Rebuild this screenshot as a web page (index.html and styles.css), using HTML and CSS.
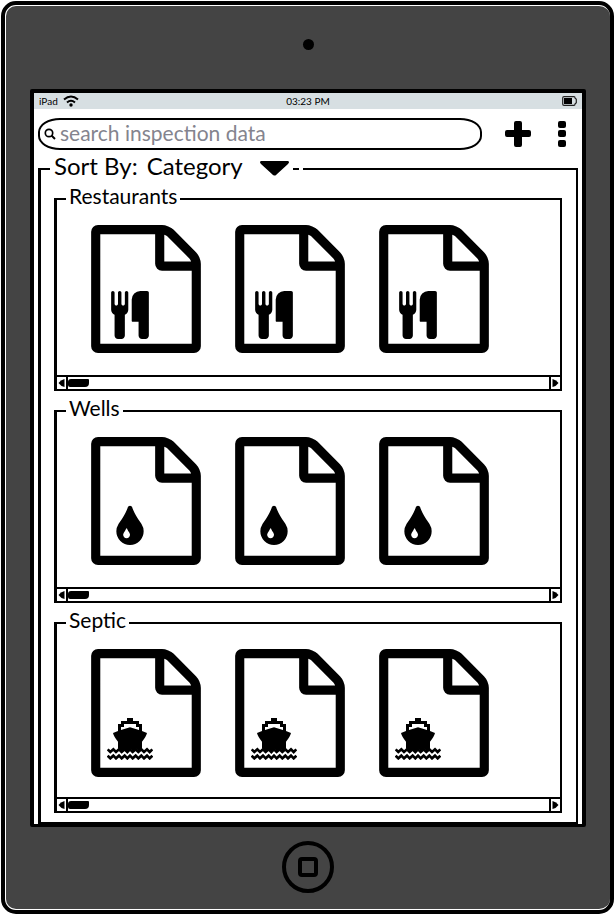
FILE: index.html
```html
<!DOCTYPE html>
<html lang="en">
<head>
<meta charset="utf-8">
<meta name="viewport" content="width=device-width, initial-scale=1">
<title>Inspection data</title>
<link rel="stylesheet" href="styles.css">
</head>
<body>
<svg class="defs" aria-hidden="true">
  <symbol id="file" viewBox="0 0 1536 1792"><path d="M1468 380q28 28 48 76t20 88v1152q0 40-28 68t-68 28h-1344q-40 0-68-28t-28-68v-1600q0-40 28-68t68-28h896q40 0 88 20t76 48zm-444-244v376h376q-10-29-22-41l-313-313q-12-12-41-22zm384 1528v-1024h-416q-40 0-68-28t-28-68v-416h-768v1536h1280z"/></symbol>
  <symbol id="cutlery" viewBox="0 0 1408 1792"><path d="M640 64v640q0 61-35.5 111t-92.5 70v779q0 52-38 90t-90 38h-128q-52 0-90-38t-38-90v-779q-57-20-92.5-70t-35.5-111v-640q0-26 19-45t45-19 45 19 19 45v416q0 26 19 45t45 19 45-19 19-45v-416q0-26 19-45t45-19 45 19 19 45v416q0 26 19 45t45 19 45-19 19-45v-416q0-26 19-45t45-19 45 19 19 45zm768 0v1600q0 52-38 90t-90 38h-128q-52 0-90-38t-38-90v-512h-224q-13 0-22.5-9.5t-9.5-22.5v-800q0-132 94-226t226-94h256q26 0 45 19t19 45z"/></symbol>
  <symbol id="drop" viewBox="0 0 1024 1536"><path d="M512 1152q0-36-20-69-1-1-15.500-22.500t-25.500-38-25-44-21-50.500q-4-16-21-16t-21 16q-7 23-21 50.500t-25 44-25.500 38-15.500 22.500q-20 33-20 69 0 53 37.500 90.500t90.500 37.500 90.500-37.500 37.500-90.500zm512-128q0 212-150 362t-362 150-362-150-150-362q0-145 81-275 6-9 62.500-90.500t101-151 99.500-178 83-201.500q9-30 34-47t51-17 51.500 17 33.500 47q28 93 83 201.500t99.500 178 101 151 62.500 90.500q81 127 81 275z"/></symbol>
  <symbol id="ship" viewBox="0 0 138 126">
    <path d="M60 0h18v9h18v9h9v21l15 6q-2 10-15 26v20l-9 9-9-8-8 8-9-8-8 8-9-8-8 8-12-9V71Q20 55 18 45l15-6V18h9V9h18zM42 36l27-8 27 8V27h-9v-9H51v9h-9z"/>
    <g fill="none" stroke="#000" stroke-width="8"><path d="M2 94l8 8 9-8 8 8 9-8 8 8 9-8 8 8 8-8 8 8 9-8 8 8 9-8 8 8 9-8 8 8 8-8"/><path d="M2 113l8 8 9-8 8 8 9-8 8 8 9-8 8 8 8-8 8 8 9-8 8 8 9-8 8 8 9-8 8 8 8-8"/></g>
  </symbol>
  <symbol id="arrow" viewBox="0 0 6 8"><path d="M6 0v8Q2 7 0 4 2 1 6 0z"/></symbol>
</svg>

<div class="device">
  <div class="bezel-top"><span class="camera"></span></div>
  <div class="screen">
    <div class="status">
      <span class="carrier">iPad
        <svg width="16" height="12" viewBox="0 0 16 12" aria-hidden="true"><g fill="none" stroke="#000" stroke-width="2"><path d="M1 4.500Q8-1.500 15 4.500"/><path d="M4 7.500Q8 4 12 7.500"/></g><circle cx="8" cy="10" r="1.700"/></svg>
      </span>
      <time>03:23 PM</time>
      <svg class="battery" width="15" height="10" viewBox="0 0 15 10" aria-hidden="true"><path d="M2 .7h10q1 0 1 1.300l1.300 1.200v3.600L13 8q0 1.300-1 1.300H2Q.7 9.300.7 8V2Q.7.7 2 .7z" fill="none" stroke="#222" stroke-width="1.200"/><path d="M2 2h8v6H2z"/></svg>
    </div>

    <div class="toolbar">
      <label class="search">
        <svg width="12" height="12" viewBox="0 0 12 12" aria-hidden="true"><circle cx="5" cy="5" r="3.700" fill="none" stroke="#000" stroke-width="1.700"/><path d="M7.500 7.500L11 11" stroke="#000" stroke-width="2"/></svg>
        <input type="search" placeholder="search inspection data" aria-label="search inspection data">
      </label>
      <button class="add" type="button" aria-label="Add"><svg width="26" height="26" viewBox="0 0 26 26"><path d="M11 0h4q2 0 2 2v7h7q2 0 2 2v3q0 2-2 2h-7v8q0 2-2 2h-4q-2 0-2-2v-8H2q-2 0-2-2v-3q0-2 2-2h7V2q0-2 2-2z"/></svg></button>
      <button class="more" type="button" aria-label="More"><svg width="8" height="26" viewBox="0 0 8 26"><rect width="8" height="7" rx="2"/><rect y="9" width="8" height="7" rx="2"/><rect y="19" width="8" height="7" rx="2"/></svg></button>
    </div>

    <fieldset class="sorted">
      <legend>
        <label for="sort">Sort By:</label>
        <select id="sort"><option>Category</option></select>
        <svg class="caret" width="29" height="15" viewBox="0 0 29 15" aria-hidden="true"><path d="M1 0h27q2 1 0 3L16 14q-1 1-3 0L1 3Q-1 1 1 0z"/></svg>
        <span class="dash"></span>
      </legend>

      <fieldset class="group">
        <legend>Restaurants</legend>
        <div class="files">
          <div class="file"><svg class="page"><use href="#file"/></svg><svg class="mark cutlery"><use href="#cutlery"/></svg></div>
          <div class="file"><svg class="page"><use href="#file"/></svg><svg class="mark cutlery"><use href="#cutlery"/></svg></div>
          <div class="file"><svg class="page"><use href="#file"/></svg><svg class="mark cutlery"><use href="#cutlery"/></svg></div>
        </div>
        <div class="scrollbar">
          <button type="button" aria-label="Scroll left"><svg><use href="#arrow"/></svg></button>
          <span class="thumb"></span>
          <button class="next" type="button" aria-label="Scroll right"><svg><use href="#arrow"/></svg></button>
        </div>
      </fieldset>

      <fieldset class="group">
        <legend>Wells</legend>
        <div class="files">
          <div class="file"><svg class="page"><use href="#file"/></svg><svg class="mark drop"><use href="#drop"/></svg></div>
          <div class="file"><svg class="page"><use href="#file"/></svg><svg class="mark drop"><use href="#drop"/></svg></div>
          <div class="file"><svg class="page"><use href="#file"/></svg><svg class="mark drop"><use href="#drop"/></svg></div>
        </div>
        <div class="scrollbar">
          <button type="button" aria-label="Scroll left"><svg><use href="#arrow"/></svg></button>
          <span class="thumb"></span>
          <button class="next" type="button" aria-label="Scroll right"><svg><use href="#arrow"/></svg></button>
        </div>
      </fieldset>

      <fieldset class="group">
        <legend>Septic</legend>
        <div class="files">
          <div class="file"><svg class="page"><use href="#file"/></svg><svg class="mark ship"><use href="#ship"/></svg></div>
          <div class="file"><svg class="page"><use href="#file"/></svg><svg class="mark ship"><use href="#ship"/></svg></div>
          <div class="file"><svg class="page"><use href="#file"/></svg><svg class="mark ship"><use href="#ship"/></svg></div>
        </div>
        <div class="scrollbar">
          <button type="button" aria-label="Scroll left"><svg><use href="#arrow"/></svg></button>
          <span class="thumb"></span>
          <button class="next" type="button" aria-label="Scroll right"><svg><use href="#arrow"/></svg></button>
        </div>
      </fieldset>
    </fieldset>
  </div>
  <div class="bezel-bottom"><button class="home" type="button" aria-label="Home"><span></span></button></div>
</div>
</body>
</html>
```
FILE: styles.css
```css
* { box-sizing: border-box; }

body {
  margin: 0;
  padding: 1px 2px 2px 1px;
  background: #fff;
  color: #000;
  font-family: Lato, "Liberation Sans", sans-serif;
  font-size: 21px;
}

svg { display: block; }
.defs { position: absolute; width: 0; height: 0; }

button {
  display: flex;
  align-items: center;
  justify-content: center;
  margin: 0;
  padding: 0;
  border: 0;
  background: none;
  cursor: pointer;
}

/* device body: black rim, thin white line, grey face */
.device {
  padding: 1px 0 1px 1px;
  border: 4px solid #000;
  border-radius: 15px;
  background: #444 content-box;
  overflow: hidden;
}
.bezel-top, .bezel-bottom { display: flex; justify-content: center; }
.bezel-top { height: 83px; align-items: center; }
.bezel-bottom { height: 82px; padding-top: 14px; align-items: flex-start; }
.camera {
  width: 11px;
  height: 11px;
  margin-top: -6px;
  border-radius: 50%;
  background: #000;
}
.home {
  width: 52px;
  height: 52px;
  border: 4px solid #000;
  border-radius: 50%;
}
.home span {
  width: 20px;
  height: 20px;
  border: 4px solid #000;
  border-radius: 4px;
}

.screen {
  margin: 0 24px;
  border: 4px solid #000;
  border-bottom-width: 3px;
  border-radius: 2px;
  background: #fff;
}

.status {
  display: grid;
  grid-template-columns: 1fr auto 1fr;
  align-items: center;
  height: 16px;
  padding: 0 5px;
  background: #d7dfe2;
  font-size: 10px;
  line-height: 14px;
}
.carrier { display: flex; align-items: center; gap: 5px; }
.battery { justify-self: end; }

.toolbar {
  display: flex;
  align-items: center;
  padding: 9px 16px 0 4px;
}
.search {
  display: flex;
  flex: 1;
  align-items: center;
  gap: 4px;
  min-width: 0;
  height: 32px;
  padding: 0 16px 0 4px;
  border: 2px solid #000;
  border-radius: 22px / 14px;
}
.search input {
  flex: 1;
  min-width: 0;
  padding: 0 0 4px;
  border: 0;
  outline: 0;
  background: none;
  font: inherit;
}
.search svg { flex: none; }
.search input::placeholder { color: #84848e; opacity: 1; }
.add { margin: 0 27px 0 23px; }

fieldset {
  min-width: 0;
  margin: 0;
  border: 2px solid #000;
  border-left-width: 3px;
}

.sorted {
  display: flex;
  flex-direction: column;
  gap: 7px;
  margin: 4px 4px 0;
  padding: 3px 14px 9px 13px;
}
.sorted > legend {
  display: flex;
  align-items: center;
  height: 29px;
  margin-left: -4px;
  padding: 0 4px;
  font-size: 24px;
}
.sorted label, .sorted select {
  height: 29px;
  margin-top: -6px;
  line-height: 29px;
}
.sorted select {
  appearance: none;
  margin-right: 16px;
  margin-left: 9px;
  padding: 0;
  border: 0;
  background: none;
  color: inherit;
  font-family: inherit;
  font-size: inherit;
}
.dash { width: 6px; height: 2px; margin-left: 4px; background: #000; }

.group { padding: 0; }
.group legend {
  margin-left: 9px;
  padding: 0 3px 6px;
  line-height: 20px;
}
.files {
  display: flex;
  gap: 34px;
  padding: 13px 34px 22px;
}
.group:last-child .files { padding-bottom: 20px; }
.file { position: relative; width: 110px; height: 128px; }
.page { width: 110px; height: 128px; }
.mark { position: absolute; }
.cutlery { left: 20px; top: 66px; width: 38px; height: 48px; }
.drop { left: 25px; top: 67px; width: 28px; height: 41px; }
.ship { left: 16px; top: 69px; width: 46px; height: 42px; }

.scrollbar {
  display: flex;
  align-items: center;
  height: 14px;
  border-top: 2px solid #000;
}
.scrollbar button {
  width: 11px;
  height: 12px;
  border-right: 2px solid #000;
}
.scrollbar svg { width: 7px; height: 8px; }
.scrollbar .next { margin-left: auto; transform: rotate(180deg); }
.thumb {
  width: 21px;
  height: 8px;
  border-radius: 3px 1px 4px 2px;
  background: #000;
}
```
